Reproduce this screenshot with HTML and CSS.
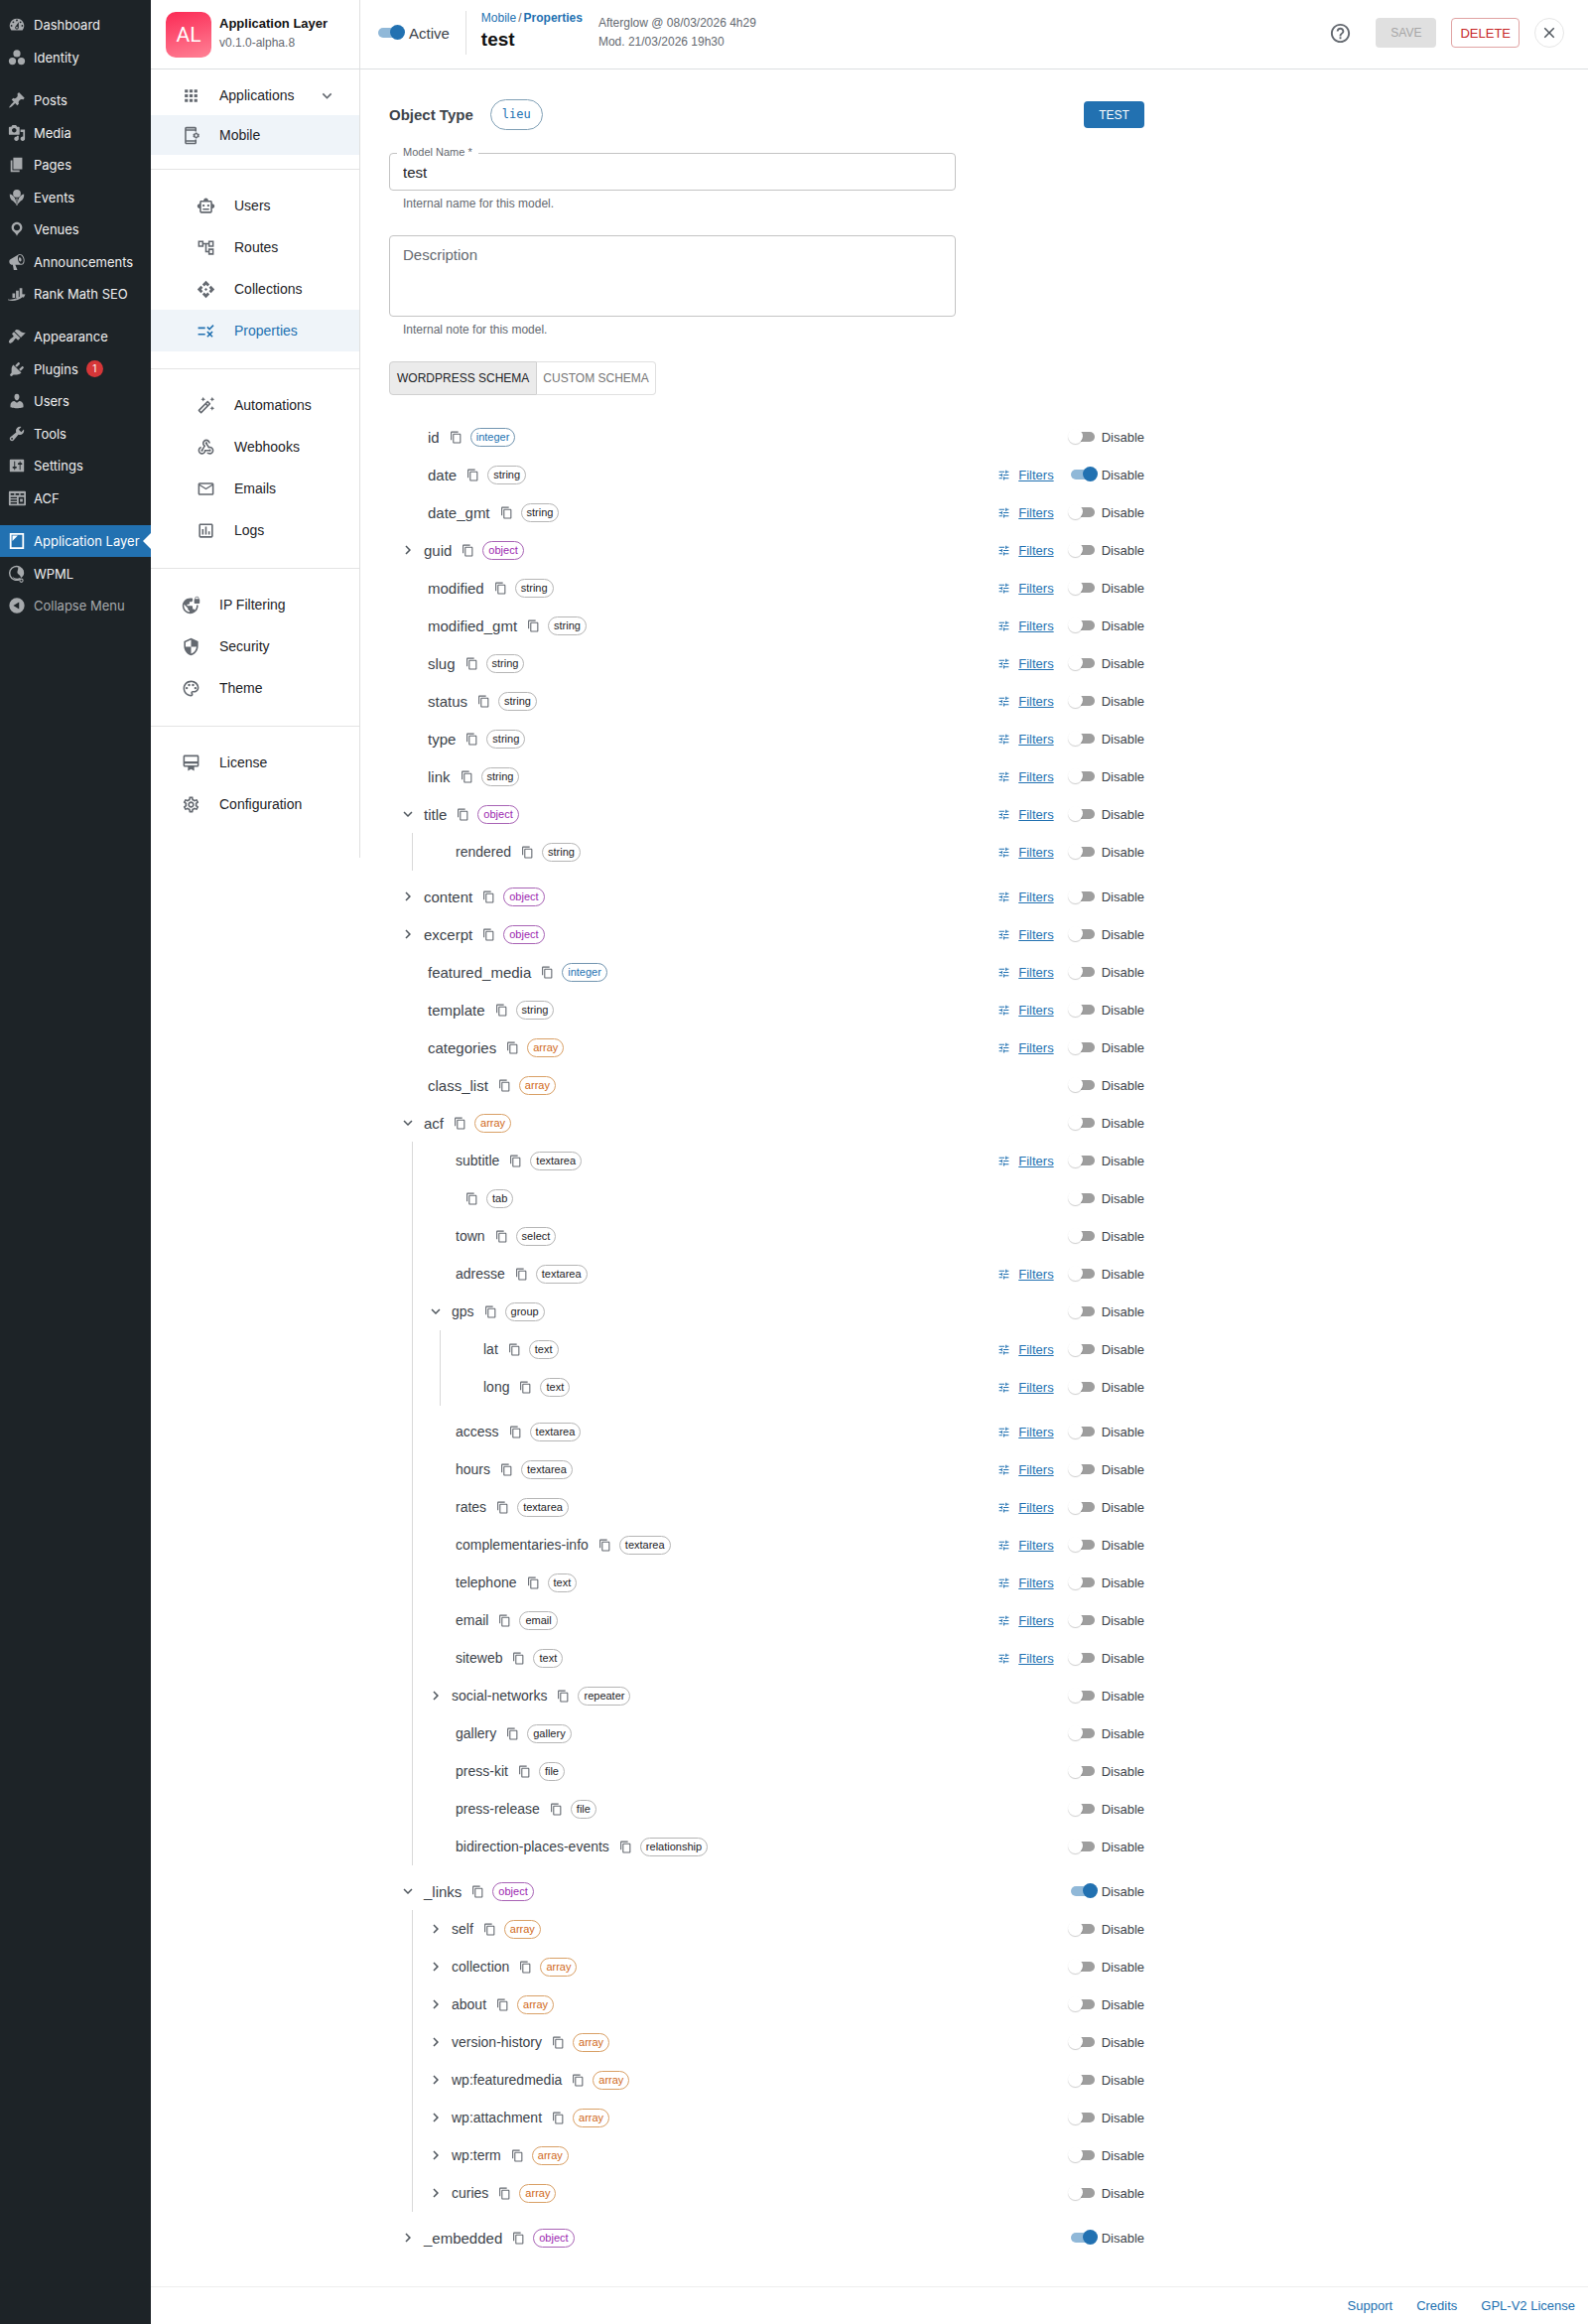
FILE: index.html
```
<!DOCTYPE html>
<html lang="en">
<head>
  <title>Application Layer - Properties</title>
  <meta charset="UTF-8">
  <meta name="viewport" content="width=device-width, initial-scale=1">
  <link rel="stylesheet" href="styles.css">
</head>
<body>
  <!-- icon sprite -->
  <svg class="sprite" aria-hidden="true">
    <symbol id="w-dashboard" viewBox="0 0 20 20"><path d="M3.76 16h12.48A7.998 7.998 0 0 0 10 3a7.998 7.998 0 0 0-6.24 13zM10 4c.55 0 1 .45 1 1s-.45 1-1 1-1-.45-1-1 .45-1 1-1zM6 6c.55 0 1 .45 1 1s-.45 1-1 1-1-.45-1-1 .45-1 1-1zm8 0c.55 0 1 .45 1 1s-.45 1-1 1-1-.45-1-1 .45-1 1-1zm-5.37 5.55L12 7v6c0 1.1-.9 2-2 2s-2-.9-2-2c0-.57.24-1.08.63-1.45zM4 10c.55 0 1 .45 1 1s-.45 1-1 1-1-.45-1-1 .45-1 1-1zm12 0c.55 0 1 .45 1 1s-.45 1-1 1-1-.45-1-1 .45-1 1-1zm-5 3c0-.55-.45-1-1-1s-1 .45-1 1 .45 1 1 1 1-.45 1-1z"/></symbol>
    <symbol id="w-identity" viewBox="0 0 20 20"><circle cx="10" cy="5.5" r="4"/><circle cx="5" cy="14" r="4"/><circle cx="15" cy="14" r="4"/></symbol>
    <symbol id="w-post" viewBox="0 0 20 20"><path d="M10.44 3.02l1.82-1.82 6.36 6.35-1.83 1.82c-1.05-.68-2.48-.57-3.41.36l-.75.75c-.92.93-1.04 2.35-.35 3.41l-1.83 1.82-2.41-2.41-2.8 2.79c-.42.42-3.38 2.71-3.8 2.29s1.86-3.39 2.28-3.81l2.79-2.79L4.1 9.36l1.83-1.82c1.05.69 2.48.57 3.4-.36l.75-.75c.93-.92 1.05-2.35.36-3.41z"/></symbol>
    <symbol id="w-media" viewBox="0 0 20 20"><path d="M13 11V4c0-.55-.45-1-1-1h-1.67L9 1H5L3.67 3H2c-.55 0-1 .45-1 1v7c0 .55.45 1 1 1h10c.55 0 1-.45 1-1zM7 4.5c1.38 0 2.5 1.12 2.5 2.5S8.38 9.5 7 9.5 4.5 8.38 4.5 7 5.62 4.5 7 4.5zM14 6h5v10.5c0 1.38-1.12 2.5-2.5 2.5S14 17.88 14 16.5s1.12-2.5 2.5-2.5c.17 0 .34.02.5.05V9h-3V6zm-4 8.05V13h2v3.5c0 1.38-1.12 2.5-2.5 2.5S7 17.88 7 16.5 8.12 14 9.5 14c.17 0 .34.02.5.05z"/></symbol>
    <symbol id="w-page" viewBox="0 0 20 20"><path d="M6 15V2h10v13H6zm-1 1h8v2H3V5h2v11z"/></symbol>
    <symbol id="w-events" viewBox="0 0 20 20"><circle cx="10" cy="5.5" r="4.3"/><path d="M2 6c2.6.2 5.4 2.6 6.6 6.4L9.3 17.5 5.800 14C3 12.600 1.700 9.500 2 6zM18 6c-2.600.2-5.400 2.600-6.600 6.400L10.700 17.500l3.500-3.500C17 12.600 18.300 9.500 18 6zM9.400 10.500h1.200V19H9.400z"/></symbol>
    <symbol id="w-location" viewBox="0 0 20 20"><path d="M10 2C6.69 2 4 4.69 4 8c0 2.02 1.17 3.71 2.53 4.89.43.37 1.18.96 1.85 1.83.74.97 1.41 2.01 1.62 2.71.21-.7.88-1.74 1.62-2.71.67-.87 1.42-1.46 1.85-1.83C14.83 11.71 16 10.02 16 8c0-3.31-2.69-6-6-6zm0 2.56c1.9 0 3.44 1.54 3.44 3.44S11.9 11.44 10 11.44 6.56 9.9 6.56 8 8.1 4.56 10 4.56z"/></symbol>
    <symbol id="w-megaphone" viewBox="0 0 20 20"><path d="M18.15 5.94c.46 1.62.38 3.22-.02 4.48-.42 1.28-1.26 2.18-2.3 2.48-.16.06-.26.06-.4.06-.06.02-.12.02-.18.02-.06.02-.14.02-.22.02h-6.8l2.22 5.5c.02.14-.06.26-.14.34-.08.1-.24.16-.34.16H6.95c-.1 0-.26-.06-.34-.16-.08-.08-.16-.2-.14-.34l-1-5.5H4.25l-.02-.02c-.5.06-1.08-.18-1.54-.62s-.88-1.08-1.06-1.88c-.24-.8-.2-1.56-.02-2.2.18-.62.58-1.08 1.06-1.3l.02-.02 9-5.4c.1-.06.18-.1.24-.16.06-.04.14-.08.24-.12.16-.08.28-.12.5-.18 1.04-.3 2.24.1 3.22.98s1.84 2.24 2.26 3.86zm-2.58 5.98h-.02c.4-.1.74-.34 1.04-.7.58-.7.86-1.76.86-3.04 0-.64-.1-1.3-.28-1.98-.34-1.36-1.02-2.5-1.78-3.24s-1.68-1.1-2.46-.88c-.82.22-1.4.96-1.7 2-.32 1.04-.28 2.36.06 3.72.38 1.36 1 2.5 1.8 3.24.78.74 1.62 1.1 2.48.88zm-2.54-7.08c.22-.04.42-.02.62.04.38.16.76.48 1.02 1s.42 1.2.42 1.78c0 .3-.04.56-.12.8-.18.48-.44.84-.86.94-.34.1-.8-.06-1.14-.4s-.64-.86-.78-1.5c-.18-.62-.12-1.24.02-1.72s.48-.84.82-.94z"/></symbol>
    <symbol id="w-rank" viewBox="0 0 20 20"><path d="M5 9.5h3v5H5zM9 6.500h3v8H9zM13 3.500h3v10h-3z"/><path d="M0 16c5 1 10.500-.5 15.500-4.500l-.8-1.200 4.800.2-2 4-.8-1.200C11.500 17.800 5 18.500 0 17z"/></symbol>
    <symbol id="w-appearance" viewBox="0 0 20 20"><path d="M14.48 11.06L7.41 3.99l1.5-1.5c.5-.56 2.3-.47 3.51.32 1.21.8 1.43 1.28 2.91 2.1 1.18.64 2.45 1.26 4.45.85zm-.71.71L6.7 4.7 4.93 6.47c-.39.39-.39 1.02 0 1.41l1.06 1.06c.39.39.39 1.03 0 1.42-.6.6-1.43 1.11-2.21 1.69-.35.26-.7.53-1.01.84C1.43 14.23.4 16.08 1.4 17.07c.99 1 2.84-.03 4.18-1.36.31-.31.58-.66.85-1.02.57-.78 1.08-1.61 1.69-2.21.39-.39 1.02-.39 1.41 0l1.06 1.06c.39.39 1.02.39 1.41 0z"/></symbol>
    <symbol id="w-plugins" viewBox="0 0 20 20"><path d="M13.11 4.36L9.87 7.6 8 5.73l3.24-3.24c.35-.34 1.05-.2 1.56.32.52.51.66 1.21.31 1.55zm-8 1.77l.91-1.12 9.01 9.01-1.19.84c-.71.71-2.63 1.16-3.82 1.16H6.14L4.9 17.26c-.59.59-1.54.59-2.12 0-.59-.58-.59-1.53 0-2.12l1.24-1.24v-3.88c0-1.13.4-3.19 1.09-3.89zm7.26 3.97l3.24-3.24c.34-.35 1.04-.21 1.55.31.52.51.66 1.21.31 1.55l-3.24 3.25z"/></symbol>
    <symbol id="w-users" viewBox="0 0 20 20"><path d="M10 9.25c-2.27 0-2.73-3.44-2.73-3.44C7 4.02 7.82 2 9.97 2c2.16 0 2.98 2.02 2.71 3.81 0 0-.41 3.44-2.68 3.44zm0 2.57L12.72 10c2.39 0 4.52 2.33 4.52 4.53v2.49s-3.65 1.13-7.24 1.13c-3.65 0-7.24-1.13-7.24-1.13v-2.49c0-2.25 1.94-4.48 4.47-4.48z"/></symbol>
    <symbol id="w-tools" viewBox="0 0 20 20"><path d="M16.68 9.77c-1.34 1.34-3.3 1.67-4.95.99l-5.41 6.52c-.99.99-2.59.99-3.58 0s-.99-2.59 0-3.57l6.52-5.42c-.68-1.65-.35-3.61.99-4.95 1.28-1.28 3.12-1.62 4.72-1.06l-2.89 2.89 2.82 2.82 2.86-2.87c.53 1.58.18 3.39-1.08 4.65zM3.81 16.21c.4.39 1.04.39 1.43 0 .4-.4.4-1.04 0-1.43-.39-.4-1.03-.4-1.43 0-.39.39-.39 1.03 0 1.43z"/></symbol>
    <symbol id="w-settings" viewBox="0 0 20 20"><path d="M18 16V4c0-.55-.45-1-1-1H3c-.55 0-1 .45-1 1v12c0 .55.45 1 1 1h14c.55 0 1-.45 1-1zM8 11h1c.55 0 1 .45 1 1s-.45 1-1 1H8v1.5c0 .28-.22.5-.5.5s-.5-.22-.5-.5V13H6c-.55 0-1-.45-1-1s.45-1 1-1h1V5.5c0-.28.22-.5.5-.5s.5.22.5.5V11zm5-2h-1c-.55 0-1-.45-1-1s.45-1 1-1h1V5.5c0-.28.22-.5.5-.5s.5.22.5.5V7h1c.55 0 1 .45 1 1s-.45 1-1 1h-1v5.5c0 .28-.22.5-.5.5s-.5-.22-.5-.5V9z"/></symbol>
    <symbol id="w-acf" viewBox="0 0 20 20"><path fill-rule="evenodd" d="M2 2h17a1 1 0 0 1 1 1v14a1 1 0 0 1-1 1H2a1 1 0 0 1-1-1V3a1 1 0 0 1 1-1zm1 2.500v2h4v-2zm5.500 0v2h4v-2zm5.500 0v2h4v-2zM3 8.500V10h7V8.500zm0 3V13h7v-1.500zm0 3V16h7v-1.500zm9-6V16h6V8.500zm1.500 2h3V14h-3z"/></symbol>
    <symbol id="w-layer" viewBox="0 0 20 20"><path fill-rule="evenodd" d="M2 1h16v18H2zm2 2v14h12V3z"/><path d="M5 4h6L5 10z"/></symbol>
    <symbol id="w-wpml" viewBox="0 0 20 20"><path fill="none" stroke="currentColor" stroke-width="1.6" d="M13 16.200A7.700 7.700 0 1 1 17 7.500"/><path d="M11 2.500c4 .2 7 3 7 6.800 0 3-2 4.200-3.200 5.200-1-1-.4-2.200-2-3.200-2-1.300-2.600-2-2.200-4C10.900 5.500 12 4.500 11 2.500z"/><path d="M5 13c2 2 5 3 8.500 1.500l1 1.500C10.500 18 6.500 16.500 5 13z"/><circle cx="15" cy="17.500" r="1.800" fill="none" stroke="currentColor" stroke-width="1.200"/></symbol>
    <symbol id="w-collapse" viewBox="0 0 20 20"><path fill-rule="evenodd" d="M10 1.500a8.500 8.500 0 1 1 0 17 8.500 8.500 0 0 1 0-17zM12.500 6 6 10l6.500 4z"/></symbol>

    <symbol id="i-apps" viewBox="0 0 24 24"><path d="M4 8h4V4H4zm6 12h4v-4h-4zm-6 0h4v-4H4zm0-6h4v-4H4zm6 0h4v-4h-4zm6-10v4h4V4zm-6 4h4V4h-4zm6 6h4v-4h-4zm0 6h4v-4h-4z"/></symbol>
    <symbol id="i-mobile" viewBox="0 0 24 24"><path fill-rule="evenodd" d="M6 1h11c1.100 0 2 .9 2 2v4h-2V6H6v12h11v-1h2v4c0 1.100-.9 2-2 2H6c-1.100 0-2-.9-2-2V3c0-1.100.9-2 2-2zm0 2v1h11V3zm0 17v1h11v-1z"/><path fill-rule="evenodd" d="m17.200 9.200.4-1h1.800l.4 1 .9.500 1-.1.900 1.600-.6.800.6.800-.9 1.600-1-.1-.9.500-.4 1h-1.800l-.4-1-.9-.5-1 .1-.9-1.600.6-.8-.6-.8.900-1.600 1 .1zM18.500 10.500a1.500 1.500 0 1 0 0 3 1.500 1.500 0 0 0 0-3z"/></symbol>
    <symbol id="i-down" viewBox="0 0 24 24"><path d="M16.590 8.590 12 13.170 7.410 8.590 6 10l6 6 6-6z"/></symbol>
    <symbol id="i-right" viewBox="0 0 24 24"><path d="M10 6 8.590 7.410 13.170 12l-4.580 4.590L10 18l6-6z"/></symbol>
    <symbol id="i-copy" viewBox="0 0 24 24"><path d="M16 1H4c-1.100 0-2 .9-2 2v14h2V3h12zm3 4H8c-1.100 0-2 .9-2 2v14c0 1.100.9 2 2 2h11c1.100 0 2-.9 2-2V7c0-1.100-.9-2-2-2m0 16H8V7h11z"/></symbol>
    <symbol id="i-tune" viewBox="0 0 24 24"><path d="M3 17v2h6v-2zM3 5v2h10V5zm10 16v-2h8v-2h-8v-2h-2v6zM7 9v2H3v2h4v2h2V9zm14 4v-2H11v2zm-6-4h2V7h4V5h-4V3h-2z"/></symbol>
    <symbol id="i-help" viewBox="0 0 24 24"><path d="M11 18h2v-2h-2zm1-16C6.480 2 2 6.480 2 12s4.480 10 10 10 10-4.480 10-10S17.520 2 12 2m0 18c-4.410 0-8-3.590-8-8s3.590-8 8-8 8 3.590 8 8-3.590 8-8 8m0-14c-2.210 0-4 1.790-4 4h2c0-1.100.9-2 2-2s2 .9 2 2c0 2-3 1.750-3 5h2c0-2.250 3-2.500 3-5 0-2.210-1.790-4-4-4"/></symbol>
    <symbol id="i-close" viewBox="0 0 24 24"><path d="M19 6.410 17.590 5 12 10.590 6.410 5 5 6.410 10.590 12 5 17.590 6.410 19 12 13.410 17.590 19 19 17.590 13.410 12z"/></symbol>
    <symbol id="i-users" viewBox="0 0 24 24"><path d="M20 9V7c0-1.100-.9-2-2-2h-3c0-1.660-1.340-3-3-3S9 3.340 9 5H6c-1.100 0-2 .9-2 2v2c-1.660 0-3 1.340-3 3s1.340 3 3 3v4c0 1.100.9 2 2 2h12c1.100 0 2-.9 2-2v-4c1.660 0 3-1.340 3-3s-1.340-3-3-3m-2 10H6V7h12zm-9-6c-.83 0-1.500-.67-1.500-1.500S8.170 10 9 10s1.500.67 1.500 1.500S9.830 13 9 13m7.500-1.500c0 .83-.67 1.500-1.500 1.500s-1.500-.67-1.500-1.500.67-1.500 1.500-1.500 1.500.67 1.500 1.500M8 15h8v2H8z"/></symbol>
    <symbol id="i-routes" viewBox="0 0 24 24"><path d="M22 11V3h-7v3H9V3H2v8h7V8h2v10h4v3h7v-8h-7v3h-2V8h2v3zM7 9H4V5h3zm10 6h3v4h-3zm0-10h3v4h-3z"/></symbol>
    <symbol id="i-collections" viewBox="0 0 24 24"><path d="m14 12-2 2-2-2 2-2zm-2-6 2.120 2.120 2.500-2.500L12 1 7.380 5.620l2.500 2.500zm-6 6 2.120-2.120-2.500-2.500L1 12l4.620 4.620 2.500-2.500zm12 0-2.120 2.120 2.500 2.500L23 12l-4.620-4.620-2.500 2.500zm-6 6-2.120-2.120-2.500 2.500L12 23l4.620-4.620-2.500-2.500z"/></symbol>
    <symbol id="i-properties" viewBox="0 0 24 24"><path d="M16.540 11 13 7.460l1.410-1.410 2.120 2.120 4.240-4.240 1.410 1.410zM11 7H2v2h9zm10 6.410L19.590 12 17 14.590 14.410 12 13 13.410 15.590 16 13 18.590 14.410 20 17 17.410 19.590 20 21 18.590 18.410 16zM11 15H2v2h9z"/></symbol>
    <symbol id="i-automations" viewBox="0 0 24 24"><path d="m20 7 .94-2.060L23 4l-2.060-.94L20 1l-.94 2.060L17 4l2.060.94zM8.500 7l.94-2.060L11.500 4l-2.060-.94L8.500 1l-.94 2.060L5.500 4l2.060.94zM20 12.500l-.94 2.060-2.060.94 2.060.94.94 2.060.94-2.060L23 15.500l-2.060-.94zm-2.290-3.380-2.830-2.830c-.2-.19-.45-.29-.71-.29s-.51.1-.71.29L2.290 17.460c-.39.39-.39 1.020 0 1.410l2.830 2.830c.2.2.45.3.71.3s.51-.1.71-.29l11.170-11.170c.39-.39.39-1.030 0-1.420m-3.540-.7 1.410 1.410L14.410 11 13 9.590zM5.830 19.590l-1.410-1.410L11.590 11 13 12.410z"/></symbol>
    <symbol id="i-webhooks" viewBox="0 0 24 24"><path d="M10 15h5.880c.27-.31.67-.5 1.120-.5.83 0 1.500.67 1.500 1.500s-.67 1.500-1.500 1.500c-.44 0-.84-.19-1.120-.5H11.900c-.46 2.280-2.480 4-4.900 4-2.760 0-5-2.240-5-5 0-2.420 1.720-4.440 4-4.900v2.070C4.840 13.580 4 14.700 4 16c0 1.650 1.350 3 3 3s3-1.350 3-3zm2.500-11c1.650 0 3 1.350 3 3h2c0-2.760-2.240-5-5-5s-5 2.240-5 5c0 1.430.6 2.710 1.550 3.620l-2.350 3.900c-.68.14-1.200.75-1.200 1.480 0 .83.67 1.500 1.500 1.500s1.500-.67 1.500-1.500c0-.16-.02-.31-.07-.45l3.380-5.630C10.490 9.610 9.500 8.420 9.500 7c0-1.650 1.350-3 3-3m4.500 9c-.64 0-1.230.2-1.720.54l-3.050-5.070C11.530 8.350 11 7.740 11 7c0-.83.67-1.500 1.500-1.500S14 6.170 14 7c0 .15-.02.29-.06.43l2.190 3.650c.28-.05.57-.08.87-.08 2.760 0 5 2.240 5 5s-2.240 5-5 5c-1.850 0-3.470-1.010-4.330-2.500h2.670c.48.32 1.050.5 1.660.5 1.650 0 3-1.350 3-3s-1.350-3-3-3"/></symbol>
    <symbol id="i-emails" viewBox="0 0 24 24"><path d="M22 6c0-1.100-.9-2-2-2H4c-1.100 0-2 .9-2 2v12c0 1.100.9 2 2 2h16c1.100 0 2-.9 2-2zm-2 0-8 5-8-5zm0 12H4V8l8 5 8-5z"/></symbol>
    <symbol id="i-logs" viewBox="0 0 24 24"><path d="M19 3H5c-1.100 0-2 .9-2 2v14c0 1.100.9 2 2 2h14c1.100 0 2-.9 2-2V5c0-1.100-.9-2-2-2m0 16H5V5h14zM7 10h2v7H7zm4-3h2v10h-2zm4 6h2v4h-2z"/></symbol>
    <symbol id="i-ip" viewBox="0 0 24 24"><path d="M22 4v-.5C22 2.120 20.880 1 19.500 1S17 2.120 17 3.500V4c-.55 0-1 .45-1 1v4c0 .55.45 1 1 1h5c.55 0 1-.45 1-1V5c0-.55-.45-1-1-1m-.8 0h-3.400v-.5c0-.94.76-1.700 1.700-1.700s1.700.76 1.700 1.700zm-2.280 8c.04.33.08.66.08 1 0 2.080-.8 3.970-2.100 5.390-.26-.81-1-1.390-1.900-1.390h-1v-3c0-.55-.45-1-1-1H7v-2h2c.55 0 1-.45 1-1V8h2c1.100 0 2-.9 2-2V3.460c-.95-.3-1.950-.46-3-.46C5.480 3 1 7.480 1 13s4.480 10 10 10 10-4.480 10-10c0-.34-.02-.67-.05-1zM10 20.930c-3.950-.49-7-3.850-7-7.930 0-.62.08-1.210.21-1.790L8 16v1c0 1.100.9 2 2 2z"/></symbol>
    <symbol id="i-security" viewBox="0 0 24 24"><path d="M12 1 3 5v6c0 5.550 3.840 10.740 9 12 5.160-1.260 9-6.450 9-12V5zm0 10.990h7c-.53 4.120-3.280 7.790-7 8.940V12H5V6.300l7-3.110z"/></symbol>
    <symbol id="i-theme" viewBox="0 0 24 24"><path d="M12 22C6.490 22 2 17.510 2 12S6.490 2 12 2s10 4.040 10 9c0 3.310-2.690 6-6 6h-1.770c-.28 0-.5.22-.5.5 0 .12.05.23.13.33.41.47.64 1.060.64 1.670 0 1.380-1.120 2.500-2.500 2.500m0-18c-4.410 0-8 3.590-8 8s3.590 8 8 8c.28 0 .5-.22.5-.5 0-.16-.08-.28-.14-.35-.41-.46-.63-1.050-.63-1.650 0-1.380 1.120-2.500 2.500-2.500H16c2.210 0 4-1.790 4-4 0-3.860-3.590-7-8-7"/><circle cx="6.500" cy="11.500" r="1.500"/><circle cx="9.500" cy="7.500" r="1.500"/><circle cx="14.500" cy="7.500" r="1.500"/><circle cx="17.500" cy="11.500" r="1.500"/></symbol>
    <symbol id="i-license" viewBox="0 0 24 24"><path d="M20 2H4c-1.110 0-2 .89-2 2v11c0 1.110.89 2 2 2h4v5l4-2 4 2v-5h4c1.110 0 2-.89 2-2V4c0-1.110-.89-2-2-2m0 13H4v-2h16zm0-5H4V4h16z"/></symbol>
    <symbol id="i-config" viewBox="0 0 24 24"><path d="M19.430 12.980c.04-.32.07-.64.07-.98s-.03-.66-.07-.98l2.110-1.650c.19-.15.24-.42.12-.64l-2-3.460c-.09-.16-.26-.25-.44-.25-.06 0-.12.010-.17.030l-2.490 1c-.52-.4-1.080-.73-1.690-.98l-.38-2.650C14.460 2.180 14.250 2 14 2h-4c-.25 0-.46.18-.49.42l-.38 2.650c-.61.25-1.170.59-1.690.98l-2.490-1c-.06-.02-.12-.03-.18-.03-.17 0-.34.09-.43.25l-2 3.460c-.13.22-.07.49.12.64l2.110 1.650c-.04.32-.07.65-.07.98s.03.66.07.98l-2.110 1.650c-.19.15-.24.42-.12.64l2 3.460c.09.16.26.25.44.25.06 0 .12-.01.17-.03l2.490-1c.52.4 1.080.73 1.690.98l.38 2.650c.03.24.24.42.49.42h4c.25 0 .46-.18.49-.42l.38-2.650c.61-.25 1.170-.59 1.690-.98l2.490 1c.06.02.12.03.18.03.17 0 .34-.09.43-.25l2-3.460c.12-.22.07-.49-.12-.64zm-1.980-1.710c.04.31.05.52.05.73s-.02.43-.05.73l-.14 1.130.89.7 1.080.84-.7 1.210-1.270-.51-1.040-.42-.9.68c-.43.32-.84.56-1.250.73l-1.060.43-.16 1.130-.2 1.350h-1.400l-.19-1.350-.16-1.130-1.060-.43c-.43-.18-.83-.41-1.230-.71l-.91-.7-1.060.43-1.270.51-.7-1.210 1.080-.84.89-.7-.14-1.130c-.03-.31-.05-.54-.05-.74s.02-.43.05-.73l.14-1.130-.89-.7-1.080-.84.7-1.210 1.270.51 1.040.42.9-.68c.43-.32.84-.56 1.250-.73l1.060-.43.16-1.130.2-1.350h1.390l.19 1.350.16 1.130 1.060.43c.43.18.83.41 1.230.71l.91.7 1.060-.43 1.270-.51.7 1.210-1.070.85-.89.7zM12 8c-2.210 0-4 1.790-4 4s1.790 4 4 4 4-1.790 4-4-1.790-4-4-4m0 6c-1.100 0-2-.9-2-2s.9-2 2-2 2 .9 2 2-.9 2-2 2"/></symbol>
  </svg>

  <div class="page">
    <nav class="wp-menu" aria-label="Main menu">
      <ul class="wp-group">
        <li><a href="#"><svg><use href="#w-dashboard"/></svg>Dashboard</a></li>
        <li><a href="#"><svg><use href="#w-identity"/></svg>Identity</a></li>
      </ul>
      <ul class="wp-group">
        <li><a href="#"><svg><use href="#w-post"/></svg>Posts</a></li>
        <li><a href="#"><svg><use href="#w-media"/></svg>Media</a></li>
        <li><a href="#"><svg><use href="#w-page"/></svg>Pages</a></li>
        <li><a href="#"><svg><use href="#w-events"/></svg>Events</a></li>
        <li><a href="#"><svg><use href="#w-location"/></svg>Venues</a></li>
        <li><a href="#"><svg><use href="#w-megaphone"/></svg>Announcements</a></li>
        <li><a href="#"><svg><use href="#w-rank"/></svg>Rank Math SEO</a></li>
      </ul>
      <ul class="wp-group">
        <li><a href="#"><svg><use href="#w-appearance"/></svg>Appearance</a></li>
        <li><a href="#"><svg><use href="#w-plugins"/></svg>Plugins <span class="count">1</span></a></li>
        <li><a href="#"><svg><use href="#w-users"/></svg>Users</a></li>
        <li><a href="#"><svg><use href="#w-tools"/></svg>Tools</a></li>
        <li><a href="#"><svg><use href="#w-settings"/></svg>Settings</a></li>
        <li><a href="#"><svg><use href="#w-acf"/></svg>ACF</a></li>
      </ul>
      <ul class="wp-group">
        <li class="current"><a href="#"><svg><use href="#w-layer"/></svg>Application Layer</a></li>
        <li><a href="#"><svg><use href="#w-wpml"/></svg>WPML</a></li>
        <li><button type="button" class="collapse"><svg><use href="#w-collapse"/></svg>Collapse Menu</button></li>
      </ul>
    </nav>

    <div class="app">
      <header class="topbar">
        <div class="brand">
          <div class="logo">AL</div>
          <div class="brand-text">
            <div class="brand-name">Application Layer</div>
            <div class="brand-version">v0.1.0-alpha.8</div>
          </div>
        </div>
        <div class="bar">
          <label class="switch active-switch"><input type="checkbox" checked>Active</label>
          <div class="heading">
            <div class="crumbs"><a href="#">Mobile</a><span>/</span><a href="#" class="crumb-current">Properties</a></div>
            <h1>test</h1>
          </div>
          <div class="meta">
            <div>Afterglow @ 08/03/2026 4h29</div>
            <div>Mod. 21/03/2026 19h30</div>
          </div>
          <div class="actions">
            <button type="button" class="help" aria-label="Help"><svg><use href="#i-help"/></svg></button>
            <button type="button" class="btn btn-save" disabled>SAVE</button>
            <button type="button" class="btn btn-delete">DELETE</button>
            <button type="button" class="close" aria-label="Close"><svg><use href="#i-close"/></svg></button>
          </div>
        </div>
      </header>

      <div class="body">
        <nav class="side" aria-label="Application">
          <div class="side-group side-first">
            <a href="#"><svg><use href="#i-apps"/></svg>Applications<svg class="expand"><use href="#i-down"/></svg></a>
            <a href="#" class="selected"><svg><use href="#i-mobile"/></svg>Mobile</a>
          </div>
          <div class="side-group side-sub">
            <a href="#"><svg><use href="#i-users"/></svg>Users</a>
            <a href="#"><svg><use href="#i-routes"/></svg>Routes</a>
            <a href="#"><svg><use href="#i-collections"/></svg>Collections</a>
            <a href="#" class="selected on"><svg><use href="#i-properties"/></svg>Properties</a>
          </div>
          <div class="side-group side-sub">
            <a href="#"><svg><use href="#i-automations"/></svg>Automations</a>
            <a href="#"><svg><use href="#i-webhooks"/></svg>Webhooks</a>
            <a href="#"><svg><use href="#i-emails"/></svg>Emails</a>
            <a href="#"><svg><use href="#i-logs"/></svg>Logs</a>
          </div>
          <div class="side-group">
            <a href="#"><svg><use href="#i-ip"/></svg>IP Filtering</a>
            <a href="#"><svg><use href="#i-security"/></svg>Security</a>
            <a href="#"><svg><use href="#i-theme"/></svg>Theme</a>
          </div>
          <div class="side-group side-last">
            <a href="#"><svg><use href="#i-license"/></svg>License</a>
            <a href="#"><svg><use href="#i-config"/></svg>Configuration</a>
          </div>
        </nav>

        <main class="content">
          <div class="type-row">
            <h2>Object Type</h2>
            <span class="type-chip">lieu</span>
            <button type="button" class="btn btn-test">TEST</button>
          </div>

          <div class="field">
            <div class="field-box">
              <label for="modelName" class="label-small">Model Name *</label>
              <input type="text" id="modelName" value="test">
            </div>
            <p class="helper">Internal name for this model.</p>
          </div>
          <div class="field">
            <div class="field-box">
              <label for="modelDescription" class="label-large">Description</label>
              <textarea id="modelDescription"></textarea>
            </div>
            <p class="helper">Internal note for this model.</p>
          </div>

          <div class="tabs">
            <button type="button" class="tab tab-on">WORDPRESS SCHEMA</button>
            <button type="button" class="tab">CUSTOM SCHEMA</button>
          </div>

          <div class="tree" id="tree"></div>
        </main>
      </div>

      <footer class="footer">
        <a href="#">Support</a>
        <a href="#">Credits</a>
        <a href="#">GPL-V2 License</a>
      </footer>
    </div>
  </div>

  <script src="schema.js"></script>
</body>
</html>
```

FILE: schema.js
```
// name, type, flags: f = filters link, c = checked, > = collapsed, v = expanded
const schema = [
  ['id', 'integer', ''],
  ['date', 'string', 'fc'],
  ['date_gmt', 'string', 'f'],
  ['guid', 'object', 'f>'],
  ['modified', 'string', 'f'],
  ['modified_gmt', 'string', 'f'],
  ['slug', 'string', 'f'],
  ['status', 'string', 'f'],
  ['type', 'string', 'f'],
  ['link', 'string', 'f'],
  ['title', 'object', 'fv', [
    ['rendered', 'string', 'f']
  ]],
  ['content', 'object', 'f>'],
  ['excerpt', 'object', 'f>'],
  ['featured_media', 'integer', 'f'],
  ['template', 'string', 'f'],
  ['categories', 'array', 'f'],
  ['class_list', 'array', ''],
  ['acf', 'array', 'v', [
    ['subtitle', 'textarea', 'f'],
    ['', 'tab', ''],
    ['town', 'select', ''],
    ['adresse', 'textarea', 'f'],
    ['gps', 'group', 'v', [
      ['lat', 'text', 'f'],
      ['long', 'text', 'f']
    ]],
    ['access', 'textarea', 'f'],
    ['hours', 'textarea', 'f'],
    ['rates', 'textarea', 'f'],
    ['complementaries-info', 'textarea', 'f'],
    ['telephone', 'text', 'f'],
    ['email', 'email', 'f'],
    ['siteweb', 'text', 'f'],
    ['social-networks', 'repeater', '>'],
    ['gallery', 'gallery', ''],
    ['press-kit', 'file', ''],
    ['press-release', 'file', ''],
    ['bidirection-places-events', 'relationship', '']
  ]],
  ['_links', 'object', 'cv', [
    ['self', 'array', '>'],
    ['collection', 'array', '>'],
    ['about', 'array', '>'],
    ['version-history', 'array', '>'],
    ['wp:featuredmedia', 'array', '>'],
    ['wp:attachment', 'array', '>'],
    ['wp:term', 'array', '>'],
    ['curies', 'array', '>']
  ]],
  ['_embedded', 'object', 'c>']
];

function icon(name) {
  return `<svg><use href="#i-${name}"/></svg>`;
}

function renderRow([name, type, flags, children]) {
  const open = flags.includes('v');
  const expandable = open || flags.includes('>');
  let html = `<div class="row${expandable ? '' : ' leaf'}">`;
  if (expandable) {
    html += `<button type="button" class="toggle" aria-label="Toggle ${name}" aria-expanded="${open}">${icon(open ? 'down' : 'right')}</button>`;
  }
  html += `<span class="name">${name}</span>
    <button type="button" class="copy" aria-label="Copy ${name}">${icon('copy')}</button>
    <span class="chip chip-${type}">${type}</span>
    <div class="row-end">`;
  if (flags.includes('f')) {
    html += `${icon('tune')}<a href="#" class="filters">Filters</a>`;
  }
  html += `<label class="switch"><input type="checkbox"${flags.includes('c') ? ' checked' : ''}>Disable</label></div></div>`;
  if (children) {
    html += `<div class="children">${children.map(renderRow).join('')}</div>`;
  }
  return html;
}

document.getElementById('tree').innerHTML = schema.map(renderRow).join('');
```

FILE: styles.css
```
* {
  box-sizing: border-box;
}

body {
  margin: 0;
  font-family: "Liberation Sans", Arial, sans-serif;
  font-size: 14px;
  color: #1d2327;
  background: #fff;
}

a {
  color: #2271b1;
  text-decoration: none;
}

button {
  padding: 0;
  border: none;
  background: none;
  font-family: inherit;
  cursor: pointer;
}

svg {
  display: block;
  flex: none;
  fill: currentColor;
}

.sprite {
  position: absolute;
  width: 0;
  height: 0;
}

.page {
  display: flex;
  min-height: 100vh;
}

/* WordPress menu */
.wp-menu {
  display: flex;
  flex-direction: column;
  flex: none;
  gap: 11px;
  width: 152px;
  padding-top: 9px;
  background: #1d2327;
  font-family: Inter, sans-serif;
}

.wp-group {
  margin: 0;
  padding: 0;
  list-style: none;
}

.wp-group li {
  position: relative;
  height: 32px;
}

.wp-group li:nth-child(even) {
  height: 33px;
}

.wp-group a,
.collapse {
  display: flex;
  align-items: center;
  gap: 8px;
  width: 100%;
  height: 100%;
  padding-left: 8px;
  color: #f0f0f1;
  font-size: 13px;
  white-space: nowrap;
}

.wp-group svg {
  width: 18px;
  height: 18px;
  color: #a7aaad;
}

.wp-group .collapse {
  color: #a7aaad;
}

.wp-group .current {
  background: #2271b1;
}

.current a,
.wp-group .current svg {
  color: #fff;
}

.current::after {
  content: "";
  position: absolute;
  top: 8px;
  right: 0;
  border: 8px solid transparent;
  border-right-color: #fff;
  border-left: none;
}

.count {
  width: 17px;
  height: 17px;
  border-radius: 50%;
  background: #d63638;
  color: #fff;
  font-size: 10px;
  line-height: 17px;
  text-align: center;
}

/* Layout */
.app {
  display: flex;
  flex-direction: column;
  flex: 1;
  min-width: 0;
}

.body {
  display: flex;
  flex: 1;
  align-items: flex-start;
}

/* Top bar */
.topbar {
  display: flex;
  height: 70px;
  border-bottom: 1px solid #dcdfe1;
}

.brand {
  display: flex;
  align-items: center;
  flex: none;
  gap: 8px;
  width: 211px;
  padding-left: 15px;
  border-right: 1px solid #e0e0e0;
}

.logo {
  width: 46px;
  height: 46px;
  border-radius: 10px;
  background: linear-gradient(165deg, #fb2a55, #ff8296);
  color: #fff;
  font-family: Roboto, sans-serif;
  font-size: 21px;
  line-height: 46px;
  text-align: center;
}

.brand-text {
  padding-bottom: 3px;
}

.brand-name {
  color: #111;
  font-size: 13px;
  font-weight: bold;
  line-height: 20px;
}

.brand-version,
.meta {
  color: #646970;
  font-size: 12px;
  line-height: 19px;
}

.bar {
  display: flex;
  align-items: center;
  flex: 1;
  padding: 0 24px 3px 15px;
}

.switch {
  display: flex;
  align-items: center;
  gap: 4px;
  color: #3c434a;
  font-size: 13px;
}

.switch input {
  appearance: none;
  position: relative;
  width: 30px;
  height: 16px;
  margin: 0;
  cursor: pointer;
}

.switch input::before {
  content: "";
  position: absolute;
  top: 3px;
  left: 3px;
  width: 24px;
  height: 10px;
  border-radius: 5px;
  background: #9e9e9e;
}

.switch input::after {
  content: "";
  position: absolute;
  top: 0;
  left: 0;
  width: 15px;
  height: 15px;
  border-radius: 50%;
  background: #fff;
  box-shadow: 0 1px 1px rgba(0, 0, 0, 0.2);
}

.switch input:checked::before {
  background: #90b8d8;
}

.switch input:checked::after {
  left: 15px;
  background: #2271b1;
  box-shadow: none;
}

.active-switch {
  font-size: 15px;
}

.heading {
  height: 44px;
  margin-left: 16px;
  padding-left: 15px;
  border-left: 1px solid #e0e0e0;
}

.crumbs {
  display: flex;
  gap: 2px;
  color: #646970;
  font-size: 12px;
  line-height: 14px;
}

.crumb-current {
  font-weight: bold;
}

.heading h1 {
  margin: 3px 0 0;
  color: #111;
  font-size: 19px;
  line-height: 24px;
}

.meta {
  margin-left: 16px;
}

.actions {
  display: flex;
  align-items: center;
  gap: 15px;
  margin-left: auto;
}

.btn {
  height: 30px;
  padding: 0 8px;
  border-radius: 4px;
  font-size: 12px;
  font-weight: 500;
}

.help {
  margin-right: 9px;
  color: #646970;
}

.help svg {
  width: 23px;
  height: 23px;
}

.btn-save {
  min-width: 61px;
  background: #e0e0e0;
  color: #a6a6a6;
}

.btn-delete {
  border: 1px solid #e0a3a3;
  color: #c62828;
  font-size: 13px;
}

.close {
  display: flex;
  align-items: center;
  justify-content: center;
  width: 30px;
  height: 30px;
  border: 1px solid #e6e6e6;
  border-radius: 50%;
  color: #50575e;
}

.close svg {
  width: 18px;
  height: 18px;
}

/* Application sidebar */
.side {
  flex: none;
  width: 211px;
  border-right: 1px solid #e0e0e0;
}

.side-group {
  padding: 15px 0 17px;
  border-bottom: 1px solid #e4e4e4;
}

.side-group a {
  display: flex;
  align-items: center;
  gap: 19px;
  height: 42px;
  padding-left: 31px;
  color: #1d2327;
}

.side-group svg {
  width: 19px;
  height: 19px;
  color: #646970;
}

.side-sub a {
  padding-left: 46px;
}

.side-first {
  padding: 6px 0 14px;
}

.side-first a {
  height: 40px;
}

.side-first .expand {
  margin-left: auto;
  margin-right: 23px;
}

.side-last {
  padding-bottom: 33px;
  border-bottom: none;
}

.side-group .selected {
  background: #eff4f9;
}

.side-group .on,
.on svg {
  color: #2271b1;
}

/* Content */
.content {
  flex: 1;
  max-width: 820px;
  padding: 30px 30px 29px 29px;
}

.type-row {
  display: flex;
  align-items: center;
  gap: 17px;
  margin-bottom: 23px;
}

.type-row h2 {
  margin: 0;
  color: #3c434a;
  font-size: 15px;
}

.type-chip {
  padding: 0 11px;
  border: 1px solid #7f9fb5;
  border-radius: 16px;
  color: #2271b1;
  font-family: "DejaVu Sans Mono", monospace;
  font-size: 12px;
  line-height: 29px;
}

.btn-test {
  min-width: 61px;
  height: 27px;
  margin-left: auto;
  background: #2271b1;
  color: #fff;
}

.field {
  width: 75%;
  margin-bottom: 22px;
}

.field-box {
  position: relative;
}

.field-box input,
.field-box textarea {
  display: block;
  width: 100%;
  height: 38px;
  padding: 0 13px;
  border: 1px solid #c4c4c4;
  border-radius: 4px;
  color: #1d2327;
  font-family: inherit;
  font-size: 15px;
  background: #fff;
}

.field-box textarea {
  height: 82px;
  padding-top: 12px;
  resize: none;
}

.field-box label {
  position: absolute;
  color: #646970;
}

.label-small {
  top: -9px;
  left: 8px;
  padding: 0 6px;
  background: #fff;
  font-size: 11px;
  line-height: 16px;
}

.label-large {
  top: 10px;
  left: 14px;
  font-size: 15px;
  line-height: 20px;
}

.helper {
  margin: 3px 14px 0;
  color: #646970;
  font-size: 12px;
  line-height: 20px;
}

.tabs {
  display: flex;
  margin-bottom: 23px;
}

.tab {
  height: 34px;
  padding: 0 6px;
  border: 1px solid #e0e0e0;
  border-left: none;
  border-radius: 0 4px 4px 0;
  color: #757575;
  font-size: 12px;
}

.tab-on {
  padding: 0 7px;
  border: 1px solid #d0d0d0;
  border-radius: 4px 0 0 4px;
  background: #ebebeb;
  color: #1d2327;
}

/* Schema tree */
.row {
  display: flex;
  align-items: center;
  height: 38px;
  padding-left: 10px;
  color: #3c434a;
}

.leaf {
  padding-left: 39px;
}

.toggle {
  margin-right: 7px;
  color: #50575e;
}

.toggle svg {
  width: 18px;
  height: 18px;
}

.name {
  font-size: 15px;
}

.children .name {
  font-size: 14px;
}

.copy {
  margin: 0 8px 0 10px;
  color: #646970;
}

.copy svg {
  width: 13px;
  height: 13px;
}

.chip {
  padding: 0 5px;
  border: 1px solid #b5b5b5;
  border-radius: 10px;
  color: #1d2327;
  font-size: 11px;
  line-height: 17px;
}

.chip-integer {
  border-color: #7295b0;
  color: #2271b1;
}

.chip-object {
  border-color: #a863b5;
  color: #9c27b0;
}

.chip-array {
  border-color: #d9a066;
  color: #d0691a;
}

.row-end {
  display: flex;
  align-items: center;
  margin-left: auto;
  color: #2271b1;
}

.row-end svg {
  width: 13px;
  height: 13px;
}

.filters {
  margin: 0 14px 0 8px;
  font-size: 13px;
  text-decoration: underline;
}

.children {
  margin: 0 0 7px 23px;
  padding-left: 4px;
  border-left: 1px solid #d8d8d8;
}

/* Footer */
.footer {
  display: flex;
  align-items: center;
  justify-content: flex-end;
  gap: 24px;
  height: 38px;
  padding-right: 13px;
  border-top: 1px solid #eee;
  font-size: 13px;
}
```
